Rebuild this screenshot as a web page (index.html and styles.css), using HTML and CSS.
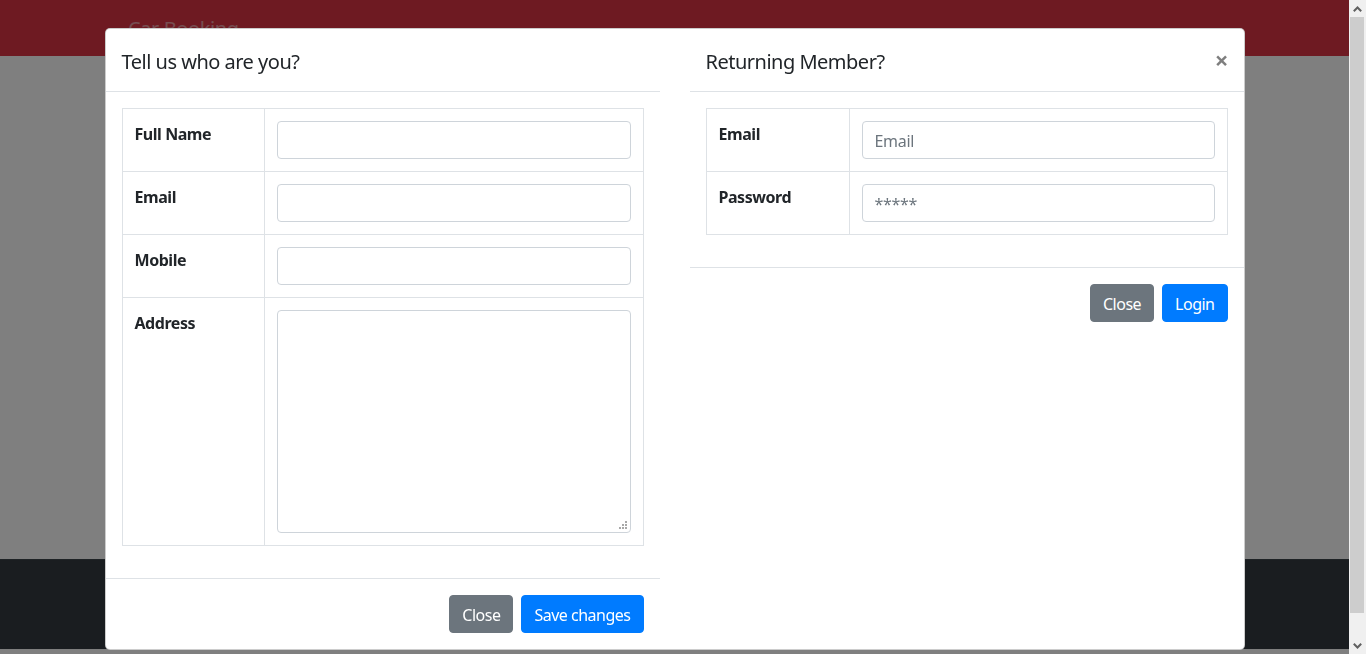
FILE: index.html
```html
<!DOCTYPE html>
<html lang="en">
<head>
<meta charset="utf-8">
<title>Car Booking</title>
<link rel="stylesheet" href="styles.css">
</head>
<body>
<div class="page">
  <nav class="navbar"><span class="brand">Car Booking</span></nav>
  <main class="main"></main>
  <footer class="footer"></footer>
</div>
<div class="backdrop"></div>
<div class="modal">
  <div class="modal-content">
    <section class="pane">
      <header class="modal-header">
        <h5 class="modal-title">Tell us who are you?</h5>
      </header>
      <div class="modal-body">
        <table class="table">
          <tr><th>Full Name</th><td><input class="form-control" type="text"></td></tr>
          <tr><th>Email</th><td><input class="form-control" type="text"></td></tr>
          <tr><th>Mobile</th><td><input class="form-control" type="text"></td></tr>
          <tr><th>Address</th><td>
            <div class="area-wrap">
              <textarea class="form-control area"></textarea>
              <svg class="grip" width="8" height="8" viewBox="0 0 8 8" aria-hidden="true">
                <rect x="6" y="0" width="2" height="2"/>
                <rect x="3" y="3" width="2" height="2"/>
                <rect x="6" y="3" width="2" height="2"/>
                <rect x="0" y="6" width="2" height="2"/>
                <rect x="3" y="6" width="2" height="2"/>
                <rect x="6" y="6" width="2" height="2"/>
              </svg>
            </div>
          </td></tr>
        </table>
      </div>
      <footer class="modal-footer">
        <button class="btn btn-secondary">Close</button>
        <button class="btn btn-primary">Save changes</button>
      </footer>
    </section>
    <section class="pane">
      <header class="modal-header">
        <h5 class="modal-title">Returning Member?</h5>
        <button class="close" aria-label="Close">×</button>
      </header>
      <div class="modal-body">
        <table class="table">
          <tr><th class="wide">Email</th><td><input class="form-control" type="text" placeholder="Email"></td></tr>
          <tr><th class="wide">Password</th><td><input class="form-control" type="text" placeholder="*****"></td></tr>
        </table>
      </div>
      <footer class="modal-footer">
        <button class="btn btn-secondary">Close</button>
        <button class="btn btn-primary">Login</button>
      </footer>
    </section>
  </div>
</div>
<div class="scrollbar" aria-hidden="true">
  <div class="sb-btn">
    <svg width="9" height="6" viewBox="0 0 9 6"><path d="M0.8 5.2 L4.5 1.5 L8.2 5.2" fill="none" stroke="#606060" stroke-width="2"/></svg>
  </div>
  <div class="sb-track"><div class="sb-thumb"></div></div>
  <div class="sb-btn">
    <svg width="9" height="6" viewBox="0 0 9 6"><path d="M0.8 0.8 L4.5 4.5 L8.2 0.8" fill="none" stroke="#606060" stroke-width="2"/></svg>
  </div>
</div>
</body>
</html>
```
FILE: styles.css
```css
html, body {
  margin: 0;
  padding: 0;
}
body {
  font-family: "Noto Sans", "Liberation Sans", sans-serif;
  font-size: 16px;
  line-height: 1.5;
  color: #212529;
  background: #fff;
  overflow: hidden;
}
.page {
  display: flex;
  flex-direction: column;
  height: 654px;
  margin-right: 17px;
}
.navbar {
  background: #dc3545;
  height: 56px;
  box-sizing: border-box;
  padding: 9px 128px 7px;
  display: flex;
  align-items: center;
}
.brand {
  color: rgba(255, 255, 255, 0.5);
  font-size: 20px;
  line-height: 30px;
  letter-spacing: -0.4px;
}
.main {
  height: 503px;
}
.footer {
  background: #343a40;
  height: 90px;
  border-top: 1px solid #3d444b;
  box-sizing: border-box;
}
.backdrop {
  position: fixed;
  top: 0;
  left: 0;
  bottom: 0;
  right: 17px;
  background: rgba(0, 0, 0, 0.5);
}
.modal {
  position: absolute;
  top: 0;
  left: 0;
  right: 17px;
  padding: 28px 0 28px;
  display: flex;
  justify-content: center;
}
.modal-content {
  width: 1140px;
  background: #fff;
  border: 1px solid rgba(0, 0, 0, 0.2);
  border-radius: 5px;
  box-sizing: border-box;
  display: grid;
  grid-template-columns: 1fr 1fr;
  column-gap: 30px;
  align-items: start;
}
.pane {
  display: flex;
  flex-direction: column;
}
.modal-header {
  display: flex;
  align-items: flex-start;
  padding: 18px 16px 14px;
  border-bottom: 1px solid #dee2e6;
}
.modal-title {
  margin: 0;
  font-size: 20px;
  font-weight: 400;
  line-height: 30px;
  letter-spacing: -0.5px;
}
.close {
  margin: -18px -17px -14px auto;
  padding: 16px;
  background: none;
  border: 0;
  font-family: inherit;
  font-size: 24px;
  font-weight: 700;
  line-height: 30px;
  color: #000;
  opacity: 0.5;
  text-shadow: 0 1px 0 #fff;
  cursor: pointer;
}
.modal-body {
  padding: 16px;
}
.table {
  width: 100%;
  border-collapse: collapse;
  margin-bottom: 16px;
}
.table th,
.table td {
  border: 1px solid #dee2e6;
  padding: 12px;
  vertical-align: top;
  text-align: left;
}
.table th {
  width: 117px;
  font-weight: 700;
  line-height: 24px;
  padding-top: 13px;
  padding-bottom: 11px;
  letter-spacing: -0.45px;
}
.table th.wide {
  width: 118px;
}
.form-control {
  display: block;
  width: 100%;
  height: 38px;
  box-sizing: border-box;
  padding: 7px 12px 5px;
  font-family: inherit;
  font-size: 16px;
  line-height: 24px;
  letter-spacing: -0.3px;
  color: #495057;
  background: #fff;
  border: 1px solid #ced4da;
  border-radius: 4px;
  margin: 0;
}
.form-control::placeholder {
  color: #6c757d;
  opacity: 1;
}
.area-wrap {
  position: relative;
}
.area {
  height: 223px;
  resize: none;
}
.grip {
  position: absolute;
  right: 4px;
  bottom: 4px;
  fill: #a8a8a8;
}
.modal-footer {
  display: flex;
  justify-content: flex-end;
  align-items: center;
  padding: 12px;
  border-top: 1px solid #dee2e6;
}
.btn {
  margin: 4px;
  padding: 7px 12px 5px;
  font-family: inherit;
  font-size: 16px;
  line-height: 24px;
  letter-spacing: -0.5px;
  border: 1px solid transparent;
  border-radius: 4px;
  color: #fff;
  cursor: pointer;
}
.btn-secondary {
  background: #6c757d;
  border-color: #6c757d;
}
.btn-primary {
  background: #007bff;
  border-color: #007bff;
}
.scrollbar {
  position: fixed;
  top: 0;
  right: 0;
  bottom: 0;
  width: 17px;
  background: #f0f0f0;
  display: flex;
  flex-direction: column;
}
.sb-btn {
  height: 17px;
  display: flex;
  align-items: center;
  justify-content: center;
}
.sb-track {
  flex: 1;
  padding: 0 2px 0 1px;
}
.sb-thumb {
  height: 596px;
  background: #cdcdcd;
}
```
